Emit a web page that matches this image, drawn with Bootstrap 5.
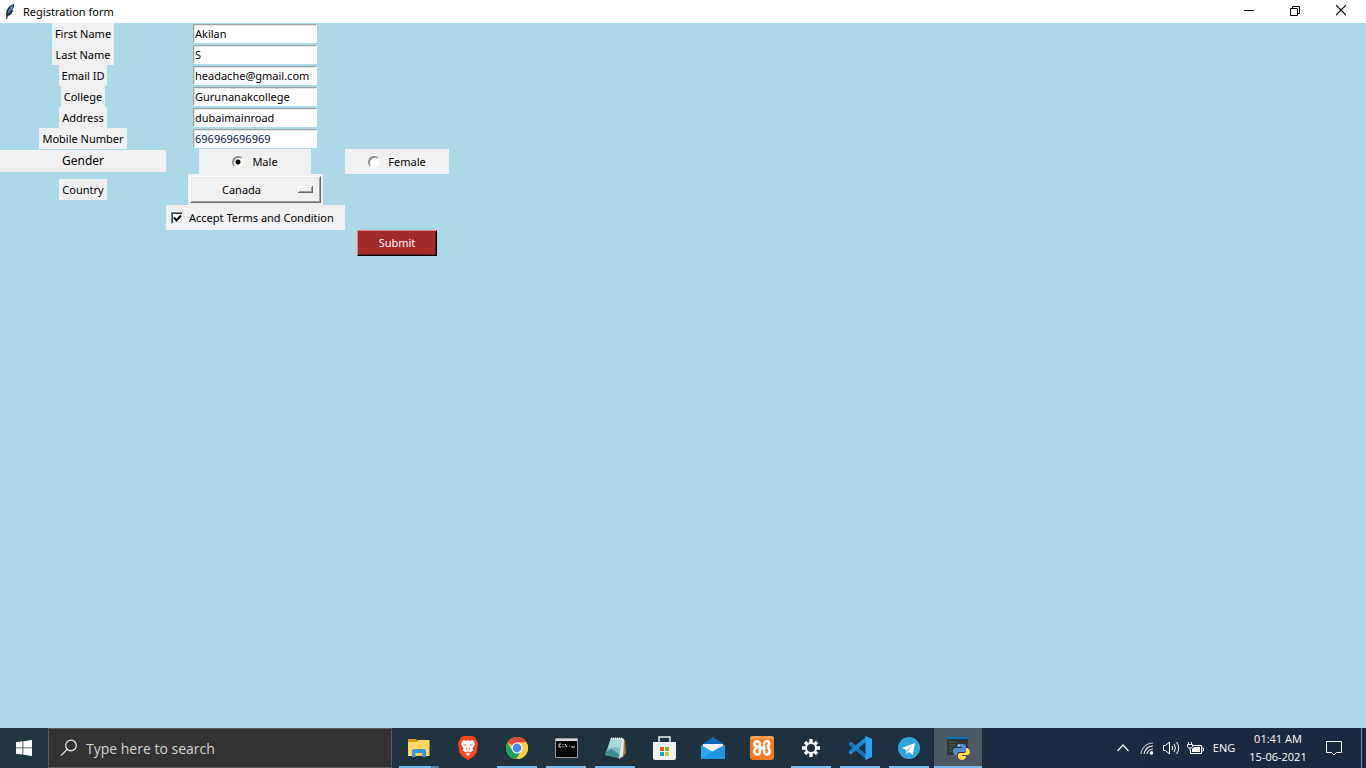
<!DOCTYPE html>
<html lang="en">
<head>
<meta charset="utf-8">
<meta name="viewport" content="width=device-width, initial-scale=1">
<title>Registration form</title>
<link href="https://cdn.jsdelivr.net/npm/bootstrap@5.3.0/dist/css/bootstrap.min.css" rel="stylesheet">
<style>
  body { font-family: "Noto Sans", "Open Sans", sans-serif; font-size: 11px; line-height: 16px; color: #000; background: #add8e6; }
  svg { display: block; flex: none; }
  .titlebar { height: 23px; background: #fff; padding-left: 4px; padding-right: 2px; }
  .win-title { padding-left: 8px; }
  .win-btn { width: 46px; height: 21px; border: 0; background: none; }

  /* form window */
  .reg-form { display: grid; grid-template-columns: 166px 179px 104px; grid-template-rows: repeat(6, 21px) 25px 31px 25px 26px; align-items: center; justify-items: center; justify-content: start; }
  .tk-label { background: #f0f0f0; height: 21px; padding: 3px 3px 2px; }
  .tk-wide { justify-self: stretch; text-align: center; font-size: 12px; height: 22px; margin-bottom: 1px; }
  .tk-entry { width: 124px; height: 19px; margin-right: 1px; border: 1px solid #fff; border-top-color: #a0a0a0; border-left-color: #a0a0a0; padding: 0 1px; background: #fff; box-shadow: inset 1px 1px #e3e3e3; outline: 0; }
  .tk-phone { color: #04184e; }
  .tk-choice { background: #f0f0f0; height: 25px; }
  .tk-male { width: 112px; margin-right: 1px; }
  .tk-accept { padding-left: 5px; gap: 6px; }
  .tk-radio { appearance: none; width: 12px; height: 12px; margin: 0; border-radius: 50%; border: 1px solid; border-color: #808080 #fff #fff #808080; background: #fff; box-shadow: inset 1px 1px #909090; }
  .tk-radio:checked { background: radial-gradient(circle, #000 0 2px, #fff 3px); }
  .tk-check { appearance: none; width: 12px; height: 12px; margin: 0; border: 1px solid; border-color: #808080 #fff #fff #808080; box-shadow: inset 1px 1px #404040, inset -1px -1px #e3e3e3; background: #fff; }
  .tk-check:checked + .tick { display: block; }
  .tick { display: none; position: absolute; left: 2px; top: 2px; pointer-events: none; }
  .tk-menu { width: 135px; height: 31px; padding: 2px; background: #f0f0f0; position: relative; }
  .tk-menu select { appearance: none; width: 100%; height: 27px; border: 1px solid; border-color: #fff #696969 #696969 #fff; box-shadow: inset 1px 1px #e3e3e3, inset -1px -1px #a0a0a0; background: #f0f0f0; padding: 0 0 0 31px; }
  .tk-menu svg { position: absolute; right: 10px; top: 12px; pointer-events: none; }
  .tk-submit { width: 80px; height: 26px; background: #a52a2a; color: #fff; border: 1px solid; border-color: #e08c8c #000 #000 #e08c8c; box-shadow: inset -1px -1px #6e1c1c; border-radius: 0; padding: 0; }

  /* taskbar */
  .taskbar { min-height: 40px; background: linear-gradient(90deg, #21373f, #1f313e 55%, #1b2943 80%, #1b2842); color: #fff; font-family: "Open Sans", sans-serif; }
  .task-btn { border: 0; padding: 0; background: none; color: #fff; width: 48px; height: 40px; display: flex; align-items: center; justify-content: center; flex: none; position: relative; }
  .search-box { width: 344px; height: 40px; background: #333; border: 1px solid #5c5c5c; padding-left: 11px; gap: 8px; }
  .search-box input { background: none; border: 0; outline: 0; font-size: 14px; line-height: 20px; color: #dcdcdc; flex: 1; min-width: 0; padding: 2px 0 0; }
  .search-box input::placeholder { color: #d2d2d2; opacity: 1; }
  .apps { gap: 1px; padding-left: 3px; }
  .running::after { content: ""; position: absolute; left: 4px; right: 4px; bottom: 0; height: 2px; background: #76b9ed; }
  .stacked::after { background: linear-gradient(90deg, #76b9ed 32px, #527e9f 32px); }
  .current { background: #4b5964; }
  .current::after { left: 0; right: 0; }
  .tray { padding-right: 4px; }
  .tray-btn { border: 0; padding: 0; background: none; color: #fff; display: flex; align-items: center; justify-content: center; width: 24px; height: 40px; }
  .tray-lang { width: 34px; }
  .tray-clock { width: 74px; line-height: 18px; flex-direction: column; }
  .tray-note { width: 38px; }
  .desk-edge { width: 1px; height: 40px; background: #8a909b; }
</style>
</head>
<body class="d-flex flex-column min-vh-100 m-0">
  <header class="titlebar d-flex align-items-center">
    <svg width="11" height="17" viewBox="0 0 11 17"><path d="M10 1C6 2 2.500 5 2 11l.5 2L2 16h1l1-3c3-1 5-4 5-6l-1 .2L10 4z" fill="#202a36"/><path d="M9 2C6 4 4 7 3.500 11 6 10 9 5 9 2z" fill="#6ea2dd"/><path d="M7 5 3 13" stroke="#223" stroke-width=".5"/></svg>
    <span class="win-title flex-grow-1">Registration form</span>
    <button class="win-btn d-flex align-items-center justify-content-center" aria-label="Minimize"><svg width="10" height="10"><path d="M0 3.500h10" stroke="#000"/></svg></button>
    <button class="win-btn d-flex align-items-center justify-content-center" aria-label="Restore"><svg width="10" height="12" fill="none" stroke="#000"><path d="M.5 2.500h7v7h-7zM2.500 2.500v-2h7v7h-2"/></svg></button>
    <button class="win-btn d-flex align-items-center justify-content-center" aria-label="Close"><svg width="10" height="13" stroke="#000" stroke-width="1.100"><path d="m0 0 10 10M10 0 0 10"/></svg></button>
  </header>

  <main class="flex-grow-1">
    <form class="reg-form" onsubmit="return false">
      <label class="tk-label" for="fname">First Name</label><input class="tk-entry" id="fname" value="Akilan"><span></span>
      <label class="tk-label" for="lname">Last Name</label><input class="tk-entry" id="lname" value="S"><span></span>
      <label class="tk-label" for="email">Email ID</label><input class="tk-entry" id="email" value="headache@gmail.com"><span></span>
      <label class="tk-label" for="college">College</label><input class="tk-entry" id="college" value="Gurunanakcollege"><span></span>
      <label class="tk-label" for="address">Address</label><input class="tk-entry" id="address" value="dubaimainroad"><span></span>
      <label class="tk-label" for="mobile">Mobile Number</label><input class="tk-entry tk-phone" id="mobile" value="696969696969"><span></span>
      <div class="tk-label tk-wide" id="gender">Gender</div>
      <label class="tk-choice tk-male d-flex align-items-center justify-content-center gap-2"><input class="tk-radio" type="radio" name="gender" checked aria-describedby="gender">Male</label>
      <label class="tk-choice w-100 d-flex align-items-center justify-content-center gap-2"><input class="tk-radio" type="radio" name="gender" aria-describedby="gender">Female</label>
      <label class="tk-label" for="country">Country</label>
      <div class="tk-menu">
        <select id="country"><option>Canada</option><option>India</option><option>UK</option></select>
        <svg width="15" height="7"><path d="M0 0h15v7H0z" fill="#696969"/><path d="M0 0h14v6H0z" fill="#fff"/><path d="M1 1h13v5H1z" fill="#a0a0a0"/><path d="M1 1h12v4H1z" fill="#f0f0f0"/></svg>
      </div><span></span>
      <span></span>
      <label class="tk-choice tk-accept w-100 d-flex align-items-center"><span class="position-relative d-flex"><input class="tk-check" type="checkbox" checked><svg class="tick" width="9" height="9" viewBox="0 0 9 9"><path d="m1 3.500 2.500 3L8 1.500" fill="none" stroke="#000" stroke-width="2"/></svg></span><span>Accept Terms and Condition</span></label><span></span>
      <span></span><span></span>
      <button class="tk-submit" type="submit">Submit</button>
    </form>
  </main>

  <footer class="taskbar d-flex align-items-center">
    <button class="task-btn" aria-label="Start"><svg width="16" height="16" fill="#fff"><path d="M0 2.200 6.500 1.300v6.200H0zM7.300 1.200 16 0v7.500H7.300zM0 8.300h6.500v6.200L0 13.700zM7.300 8.300H16V16l-8.700-1.200z"/></svg></button>
    <div class="search-box d-flex align-items-center">
      <svg width="18" height="18" fill="none" stroke="#eee" stroke-width="1.200"><circle cx="11" cy="6.500" r="5.300"/><path d="M7.200 10.300 1 16.500"/></svg>
      <input type="text" aria-label="Search" placeholder="Type here to search">
    </div>
    <nav class="apps d-flex flex-grow-1">
      <button class="task-btn running stacked" aria-label="File Explorer"><svg width="22" height="20"><path d="M0 1h8l2 2h11v4H0z" fill="#dc9a13"/><path d="M0 4h9l1-2h11.500v16H0z" fill="#ffd766"/><path d="M4 19v-6.500l1.500-1.500h11l1.500 1.500V19h-3.500v-4h-7v4z" fill="#3595dc"/></svg></button>
      <button class="task-btn" aria-label="Brave"><svg width="20" height="24" viewBox="0 0 20 24"><path d="M5 0h10l2.500 2L19 5l1 2-1.500 10-3 3.500L10 24l-5.500-3.500-3-3.500L0 7l1-2 1.500-3z" fill="#fb4420"/><path d="m5 4 3 .7 2-.4 2 .4L15 4l2 4-2.500 4.500.7 2L12 16.500 10 15.200l-2 1.300-3.200-2 .7-2L3 8zm2.500 14 2.500-1.500 2.500 1.500-2.500 2z" fill="#fff"/><path d="m5 8.300 3.500.5L7.500 10zm10 0-3.500.5 1 1.200zM8 11l1.500 2-1 1zm4 0-1.500 2 1 1z" fill="#fb4420"/></svg></button>
      <button class="task-btn running" aria-label="Chrome"><svg width="22" height="22" viewBox="0 0 22 22"><circle cx="11" cy="11" r="11" fill="#ffcd40"/><path d="M11 11 1.500 5.500A11 11 0 0 1 20.500 5.500H11z" fill="#dd4b3e"/><path d="M1.500 5.500A11 11 0 0 0 10.500 22l5-8.500L11 11l-5 2z" fill="#1da362"/><path d="M11 5.500h9.500A11 11 0 0 1 10.500 22l5.300-8.500z" fill="#ffcd40"/><circle cx="11" cy="11" r="5.500" fill="#fff"/><circle cx="11" cy="11" r="4.400" fill="#4587f3"/></svg></button>
      <button class="task-btn running" aria-label="Command Prompt"><svg width="23" height="20"><path d="M.5.500h22v19H.5z" fill="#050505" stroke="#999"/><path d="M1 1h21v2H1z" fill="#d5d9dd"/><path d="M6 6H4v3h2M8 6v1m0 1v1m2-3 2 3m2-1h1m1 1h4" stroke="#ddd" fill="none"/></svg></button>
      <button class="task-btn running" aria-label="Notepad"><svg width="23" height="23"><path d="m17 2 4 1 1 13-4 5-1-2z" fill="#a67a45"/><path d="M7 1h11l2 1-1 17-4 3z" fill="#e6ebe9"/><path d="M7 1h11l-3 20L1 18z" fill="#78b8c4"/><path d="M7 1h11l-2 10C9 9 8 12 4 11z" fill="#a9d6dd"/><path d="m2 15 5-3 8 5v4L1 18z" fill="#408995"/><path d="M7 1.500h11" stroke="#f3f5f5" stroke-width="2" stroke-dasharray="1 1"/></svg></button>
      <button class="task-btn" aria-label="Microsoft Store"><svg width="23" height="24"><path d="M6 7V1h11v6" fill="none" stroke="#eee" stroke-width="1.500"/><path d="M0 6h23v16q0 2-2 2H2q-2 0-2-2z" fill="#f2f2f2"/><path d="M7 11h4v4H7z" fill="#f35325"/><path d="M12 11h4v4h-4z" fill="#81bc06"/><path d="M7 16h4v4H7z" fill="#05a6f0"/><path d="M12 16h4v4h-4z" fill="#ffba08"/></svg></button>
      <button class="task-btn" aria-label="Mail"><svg width="24" height="22"><path d="M0 8 12 0l12 8-12 8z" fill="#0968bd"/><path d="M2 7h20v8H2z" fill="#f4f4f4"/><path d="m0 8 12 7 12-7v14H0z" fill="#29a8ee"/><path d="m0 22 12-8 12-6v14z" fill="#1d96e3"/></svg></button>
      <button class="task-btn" aria-label="XAMPP"><svg width="24" height="24"><rect width="24" height="24" rx="3" fill="#f27a24"/><path d="M0 3q0-3 3-3h18q3 0 3 3z" fill="#f89c59"/><path d="M8 5.500C3.500 4.500 3.500 10 7 10.500l2 .5M16 5.500q2-1.500 3 1t-2 4M8 12c-4.500-1-5 7-.5 6.500 2.500 0 2.500-2 2.500-4V9q0-3-2-3.500M10 12h4M14 16V9q0-4 3-3.800M14 14q0 4.500 3 4.500c3.500 0 3.500-6 0-7.500" fill="none" stroke="#fff" stroke-width="2.600"/></svg></button>
      <button class="task-btn running" aria-label="Settings"><svg width="18" height="18" viewBox="-9 -9 18 18"><circle r="5" fill="none" stroke="#fff" stroke-width="2"/><g stroke="#fff" stroke-width="3.400"><path d="M0-9v4M0 5v4M-9 0h4M5 0h4"/><path d="M0-8.500v3M0 5.500v3M-8.500 0h3M5.500 0h3" transform="rotate(45)"/></g></svg></button>
      <button class="task-btn running" aria-label="Visual Studio Code"><svg width="24" height="24"><path d="m1 7 2-1.500L19 19v5L1 9z" fill="#1976b9"/><path d="m1 17 2 1.500L19 5V0L1 15z" fill="#1688d1"/><path d="M17.500 0 24 3v18l-6.500 3z" fill="#2ba5ef"/></svg></button>
      <button class="task-btn running" aria-label="Telegram"><svg width="22" height="22"><circle cx="11" cy="11" r="11" fill="#30a4dc"/><path d="m4 11 13-5-2.200 12-4-3-2.200 2-.5-4z" fill="#fff"/><path d="m8 13 6.500-4.500-4 5.500-2 3z" fill="#b7d5e6"/></svg></button>
      <button class="task-btn running current" aria-label="Registration form"><svg width="24" height="24"><path d="M1 1h21v18H1z" fill="#303638"/><path d="M1 1h21v2H1z" fill="#0f73c5"/><path d="M3 6h7M3 9h6M3 12h4M3 15h5" stroke="#42663e" stroke-width="1"/><path d="M12 8h5q3 0 3 3v3q0 2-2 2h-5q-2 0-2 3H9q-2-1-2-4t3-3h6v-1h-5v-1q0-2 1-2z" fill="#4b91ce"/><path d="M20 12h1q3 1 3 4t-3 3h-5v1h4v1q-1 3-4 3t-4-3v-2q0-2 2-2h4q2 0 2-3z" fill="#ffdb4b"/><circle cx="13" cy="9.500" r=".7" fill="#fff"/></svg></button>
    </nav>
    <div class="tray d-flex align-items-center">
      <button class="tray-btn" aria-label="Show hidden icons"><svg width="12" height="8"><path d="m.5 7 5.500-6 5.500 6" fill="none" stroke="#fff" stroke-width="1.200"/></svg></button>
      <button class="tray-btn" aria-label="Network"><svg width="14" height="14" fill="none" stroke="#fff" stroke-width="1.100"><path d="M1 13A12 12 0 0 1 13 2" opacity=".65"/><path d="M4 13A9 9 0 0 1 13 5M7 13A6 6 0 0 1 13 8"/><path d="M10 13a3 3 0 0 1 3-2" opacity=".7"/><circle cx="11.500" cy="12" r="1.200" fill="#fff"/></svg></button>
      <button class="tray-btn" aria-label="Volume"><svg width="17" height="14" fill="none" stroke="#fff"><path d="M.5 4.500h2l4-3.500v12l-4-3.500h-2zM9 5q1.500 2 0 4M11 3q3 4 0 8M13.500 1q4.500 6 0 12"/></svg></button>
      <button class="tray-btn" aria-label="Battery"><svg width="17" height="13"><path d="M6 3.500h8.500v8h-11V8M15 6h1.500v3H15M1.500 0v3M4.500 0v3M.5 2.500h5v2l-1 1.500h-3l-1-1.500zM3 6v2.500" fill="none" stroke="#fff"/><path d="M7 5h6v5H5V7z" fill="#fff"/></svg></button>
      <button class="tray-btn tray-lang">ENG</button>
      <button class="tray-btn tray-clock"><span>01:41 AM</span><span>15-06-2021</span></button>
      <button class="tray-btn tray-note" aria-label="Notifications"><svg width="16" height="16"><path d="M.5 1.500h15v11h-5L8 15l-2.500-2.500h-5z" fill="none" stroke="#fff"/></svg></button>
      <span class="ps-2"></span><span class="desk-edge"></span>
    </div>
  </footer>
<script src="https://cdn.jsdelivr.net/npm/bootstrap@5.3.0/dist/js/bootstrap.bundle.min.js"></script>
</body>
</html>
